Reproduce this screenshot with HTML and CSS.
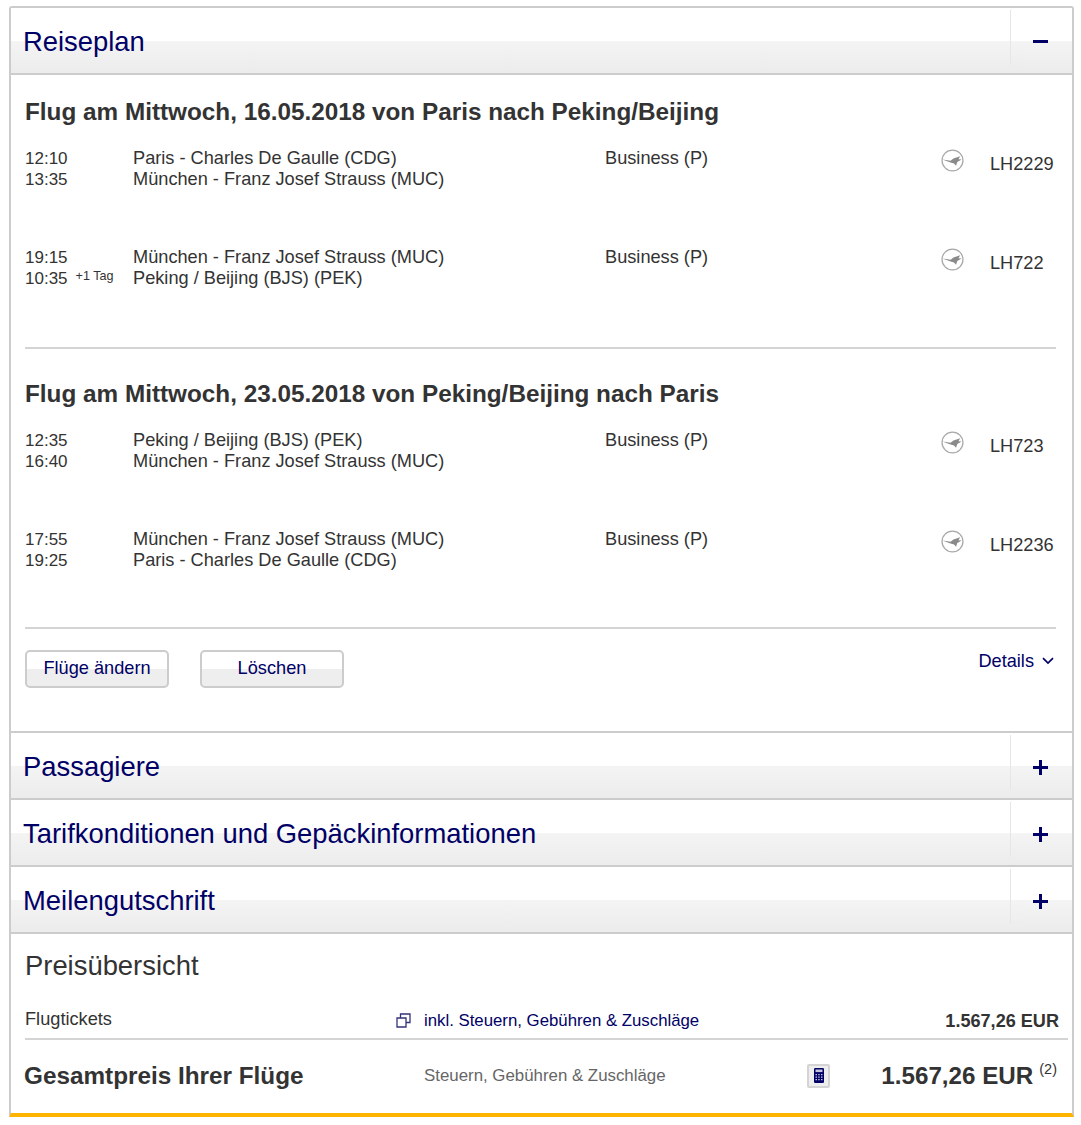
FILE: index.html
```html
<!DOCTYPE html>
<html lang="de">
<head>
    <meta charset="UTF-8">
    <title>Reiseplan</title>
    <link rel="stylesheet" href="styles.css">
</head>
<body>
    <svg class="defs" width="0" height="0">
        <symbol id="crane" viewBox="0 0 24 24">
            <circle cx="12" cy="12" r="10.9" fill="#fff" stroke="#a8a8a8" stroke-width="1.3"/>
            <path d="M1.5 11 L10 12.3 L13 10 L20 7.5 L18.2 10.8 L21.5 11 L17 13.6 L15.7 17.5 L13.6 15 L10 14 Z" fill="#8a8a8a"/>
        </symbol>
    </svg>
    <div class="booking">
        <section class="panel">
            <header class="panel-head">
                <h2>Reiseplan</h2>
                <div class="toggle"><span class="minus"></span></div>
            </header>
            <div class="panel-body">
                <div class="trip">
                    <h3>Flug am Mittwoch, 16.05.2018 von Paris nach Peking/Beijing</h3>
                    <div class="leg">
                        <div class="times"><div>12:10</div><div>13:35</div></div>
                        <div class="route"><div>Paris - Charles De Gaulle (CDG)</div><div>München - Franz Josef Strauss (MUC)</div></div>
                        <div class="cabin">Business (P)</div>
                        <svg class="crane"><use href="#crane"/></svg>
                        <div class="flight">LH2229</div>
                    </div>
                    <div class="leg">
                        <div class="times"><div>19:15</div><div>10:35<span class="plus-day">+1 Tag</span></div></div>
                        <div class="route"><div>München - Franz Josef Strauss (MUC)</div><div>Peking / Beijing (BJS) (PEK)</div></div>
                        <div class="cabin">Business (P)</div>
                        <svg class="crane"><use href="#crane"/></svg>
                        <div class="flight">LH722</div>
                    </div>
                </div>
                <div class="trip">
                    <h3>Flug am Mittwoch, 23.05.2018 von Peking/Beijing nach Paris</h3>
                    <div class="leg">
                        <div class="times"><div>12:35</div><div>16:40</div></div>
                        <div class="route"><div>Peking / Beijing (BJS) (PEK)</div><div>München - Franz Josef Strauss (MUC)</div></div>
                        <div class="cabin">Business (P)</div>
                        <svg class="crane"><use href="#crane"/></svg>
                        <div class="flight">LH723</div>
                    </div>
                    <div class="leg">
                        <div class="times"><div>17:55</div><div>19:25</div></div>
                        <div class="route"><div>München - Franz Josef Strauss (MUC)</div><div>Paris - Charles De Gaulle (CDG)</div></div>
                        <div class="cabin">Business (P)</div>
                        <svg class="crane"><use href="#crane"/></svg>
                        <div class="flight">LH2236</div>
                    </div>
                </div>
                <div class="actions">
                    <button class="btn btn-change">Flüge ändern</button>
                    <button class="btn btn-delete">Löschen</button>
                    <a class="details" href="#">Details
                        <svg width="12" height="8" viewBox="0 0 12 8"><path d="M1 1.2 L6 6 L11 1.2" fill="none" stroke="#000066" stroke-width="1.7"/></svg>
                    </a>
                </div>
            </div>
        </section>

        <section class="panel">
            <header class="panel-head">
                <h2>Passagiere</h2>
                <div class="toggle"><span class="plus"></span></div>
            </header>
        </section>
        <section class="panel">
            <header class="panel-head">
                <h2>Tarifkonditionen und Gepäckinformationen</h2>
                <div class="toggle"><span class="plus"></span></div>
            </header>
        </section>
        <section class="panel">
            <header class="panel-head">
                <h2>Meilengutschrift</h2>
                <div class="toggle"><span class="plus"></span></div>
            </header>
        </section>

        <section class="prices">
            <h2 class="prices-title">Preisübersicht</h2>
            <div class="price-row">
                <div class="price-label">Flugtickets</div>
                <a class="price-link" href="#">
                    <svg width="15" height="15" viewBox="0 0 15 15"><path d="M4.5 4.5 V1 H14 V9.5 H10.5 M1 5 H10 V14 H1 Z" fill="none" stroke="#33337a" stroke-width="1.3"/></svg>
                    <span>inkl. Steuern, Gebühren &amp; Zuschläge</span>
                </a>
                <div class="price-value">1.567,26 EUR</div>
            </div>
            <div class="total-row">
                <div class="total-label">Gesamtpreis Ihrer Flüge</div>
                <div class="total-note">Steuern, Gebühren &amp; Zuschläge</div>
                <div class="calc">
                    <svg width="10" height="15" viewBox="0 0 10 15">
                        <rect width="10" height="15" rx="1.2" fill="#000066"/>
                        <rect x="1.5" y="1.5" width="7" height="2.6" fill="#c5c5dc"/>
                        <path d="M1.5 6 h1.5 v1.3 h-1.5 z M4.2 6 h1.5 v1.3 h-1.5 z M7 6 h1.5 v1.3 h-1.5 z M1.5 8.5 h1.5 v1.3 h-1.5 z M4.2 8.5 h1.5 v1.3 h-1.5 z M7 8.5 h1.5 v1.3 h-1.5 z M1.5 11 h1.5 v1.3 h-1.5 z M4.2 11 h1.5 v1.3 h-1.5 z M7 11 h1.5 v1.3 h-1.5 z" fill="#c5c5dc"/>
                    </svg>
                </div>
                <div class="total-value">1.567,26 EUR<sup>(2)</sup></div>
            </div>
        </section>
    </div>
</body>
</html>
```

FILE: styles.css
```css
body {
    margin: 0;
    background-color: #ffffff;
    color: #333333;
    font-family: "Liberation Sans", Arial, sans-serif;
}

.defs {
    display: block;
    height: 0;
}

.booking {
    width: 1061px;
    margin: 6px 0 0 9px;
    border-left: 2px solid #cccccc;
    border-right: 2px solid #cccccc;
    border-top: 2px solid #cccccc;
    border-bottom: 4px solid #ffb400;
    border-radius: 3px 3px 0 0;
}

/* collapsible panels */
.panel-head {
    display: flex;
    justify-content: space-between;
    height: 65px;
    border-bottom: 2px solid #cccccc;
    background: linear-gradient(to bottom, #ffffff 0, #ffffff 33px, #f4f4f4 33px, #ececec 100%);
}

.panel-head h2 {
    margin: 0;
    padding: 18px 0 0 12px;
    color: #000066;
    font-size: 27.4px;
    font-weight: normal;
    line-height: 32px;
}

.toggle {
    width: 62px;
    height: 55px;
    box-sizing: border-box;
    display: flex;
    align-items: center;
    justify-content: center;
    margin-top: 2px;
    padding-right: 2px;
    border-left: 1px solid #e6e6e6;
}

.minus {
    width: 15px;
    height: 3px;
    margin-top: 7px;
    background-color: #000066;
}

.plus {
    width: 15px;
    height: 15px;
    margin-top: 9px;
    background:
        linear-gradient(#000066, #000066) center / 15px 3px no-repeat,
        linear-gradient(#000066, #000066) center / 3px 15px no-repeat;
}

.panel-body {
    height: 658px;
    box-sizing: border-box;
    padding: 0 16px 0 14px;
    border-bottom: 2px solid #cccccc;
}

/* flights */
.trip {
    height: 274px;
    box-sizing: border-box;
    padding-top: 8px;
    border-bottom: 2px solid #d4d4d4;
}

.trip + .trip {
    height: 280px;
    padding-top: 16px;
}

.trip h3 {
    margin: 0;
    padding-top: 15px;
    font-size: 24.3px;
    line-height: 28px;
    font-weight: bold;
}

.leg {
    display: flex;
    height: 99px;
    font-size: 18.2px;
    line-height: 20.5px;
}

.trip h3 + .leg {
    margin-top: 23px;
}

.times {
    width: 108px;
    font-size: 17px;
    white-space: nowrap;
}

.plus-day {
    margin-left: 8px;
    font-size: 12.6px;
    line-height: 0;
    vertical-align: 4px;
}

.route {
    width: 472px;
    margin-top: -1px;
}

.cabin {
    width: 336px;
    margin-top: -1px;
}

.crane {
    width: 23px;
    height: 23px;
}

.flight {
    margin: 5px 0 0 26px;
}

/* buttons */
.actions {
    display: flex;
    align-items: flex-start;
    padding-top: 21px;
}

.btn {
    height: 38px;
    padding: 0 0 2px;
    border: 2px solid #cccccc;
    border-radius: 5px;
    background: linear-gradient(to bottom, #ffffff 0, #ffffff 17px, #eeeeee 17px, #eeeeee 100%);
    color: #000066;
    font-family: inherit;
    font-size: 18.2px;
}

.btn-change {
    width: 144px;
}

.btn-delete {
    width: 144px;
    margin-left: 31px;
}

.details {
    display: flex;
    align-items: center;
    gap: 8px;
    margin: 1px 2px 0 auto;
    color: #000066;
    font-size: 18.2px;
    line-height: 20px;
    text-decoration: none;
}

/* prices */
.prices-title {
    margin: 0;
    padding: 16px 0 0 14px;
    font-size: 27.4px;
    line-height: 32px;
    font-weight: normal;
}

.price-row {
    display: flex;
    align-items: center;
    height: 41px;
    box-sizing: border-box;
    margin: 17px 4px 0 14px;
    padding: 1px 9px 0 0;
    border-bottom: 2px solid #d4d4d4;
}

.price-label {
    width: 371px;
    font-size: 18.2px;
}

.price-link {
    display: flex;
    align-items: center;
    gap: 13px;
    margin-top: 3px;
    color: #000066;
    font-size: 16.8px;
    text-decoration: none;
}

.price-value {
    margin: 4px 0 0 auto;
    font-weight: bold;
    font-size: 18.1px;
}

.total-row {
    display: flex;
    align-items: center;
    height: 73px;
    box-sizing: border-box;
    padding: 0 15px 2px 13px;
}

.total-label {
    width: 400px;
    font-size: 24.3px;
    font-weight: bold;
}

.total-note {
    width: 383px;
    color: #666666;
    font-size: 16.85px;
}

.calc {
    display: flex;
    align-items: center;
    justify-content: center;
    width: 19px;
    height: 20px;
    border: 2px solid #d4d4d4;
    border-radius: 2px;
    background-color: #eeeeee;
}

.total-value {
    margin-left: auto;
    font-size: 24.2px;
    font-weight: bold;
}

.total-value sup {
    margin-left: 6px;
    font-size: 14.5px;
    font-weight: normal;
    line-height: 0;
    vertical-align: 10px;
}
```
